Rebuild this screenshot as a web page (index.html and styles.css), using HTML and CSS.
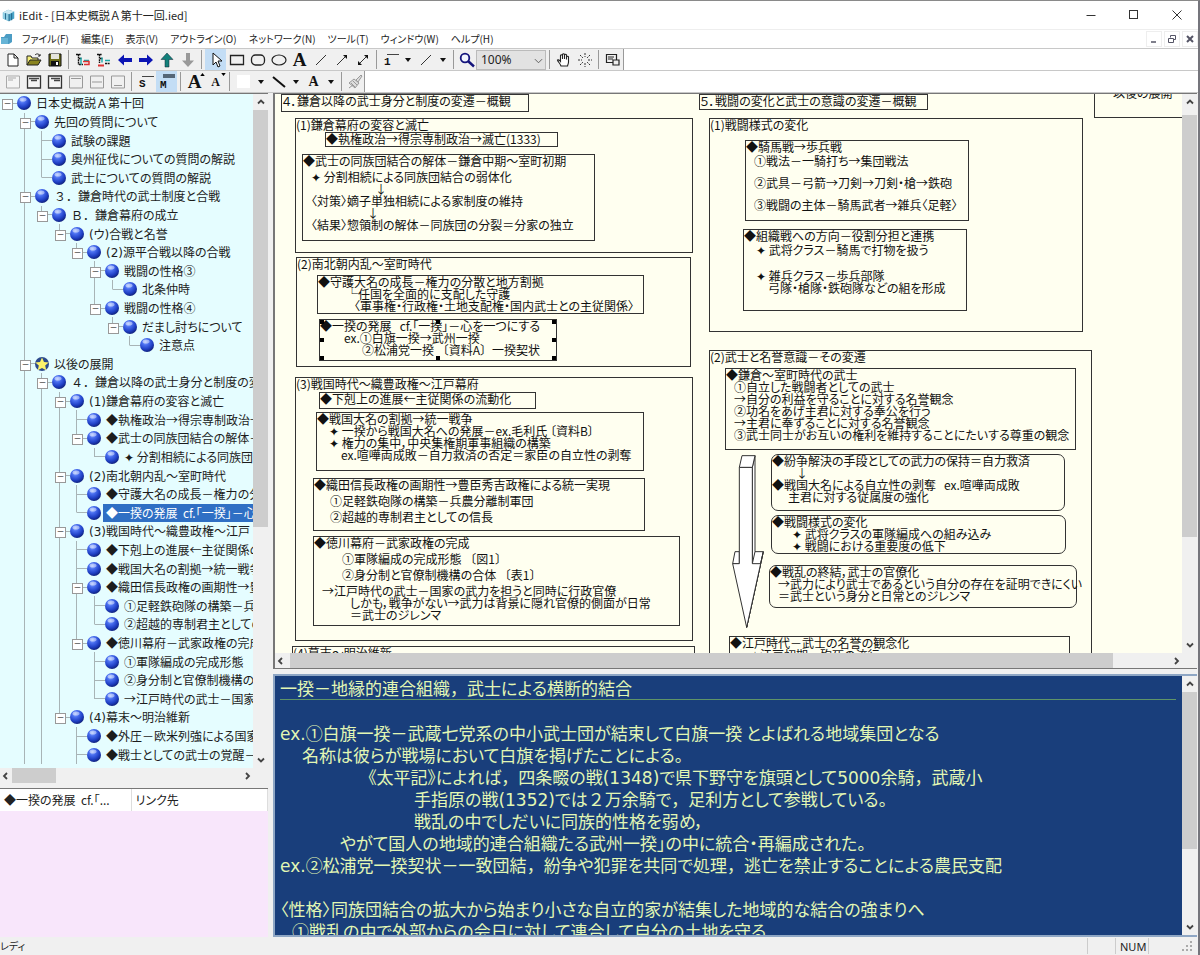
FILE: index.html
```html
<!DOCTYPE html>
<html lang="ja">
<head>
<meta charset="utf-8">
<title>iEdit - [日本史概説Ａ第十一回.ied]</title>
<link rel="stylesheet" href="styles.css">
</head>
<body>
<svg class="defs" aria-hidden="true">
  <defs>
    <radialGradient id="ball" cx="38%" cy="28%" r="75%">
      <stop offset="0" stop-color="#9db8ff"/><stop offset=".3" stop-color="#4a6ff0"/><stop offset=".7" stop-color="#1f3fc4"/><stop offset="1" stop-color="#0f1f78"/>
    </radialGradient>
    <symbol id="i-ball" viewBox="0 0 16 16"><circle cx="8" cy="8" r="7" fill="url(#ball)"/><ellipse cx="7" cy="4.500" rx="3.500" ry="2" fill="#fff" opacity=".45"/></symbol>
    <symbol id="i-star" viewBox="0 0 16 16"><circle cx="8" cy="8" r="7" fill="#2c4a8c"/><path d="M8 1.500l2 4.400 4.700.5-3.500 3.200 1 4.700L8 12l-4.200 2.300 1-4.700L1.300 6.400 6 5.900z" fill="#fdf36a"/></symbol>
    <symbol id="i-up" viewBox="0 0 10 10"><path d="M2 6.500L5 3.500l3 3" fill="none" stroke="#444" stroke-width="1.800"/></symbol>
    <symbol id="i-down" viewBox="0 0 10 10"><path d="M2 3.500l3 3 3-3" fill="none" stroke="#444" stroke-width="1.800"/></symbol>
    <symbol id="i-left" viewBox="0 0 10 10"><path d="M6.500 2l-3 3 3 3" fill="none" stroke="#444" stroke-width="1.800"/></symbol>
    <symbol id="i-right" viewBox="0 0 10 10"><path d="M3.500 2l3 3-3 3" fill="none" stroke="#444" stroke-width="1.800"/></symbol>
    <symbol id="i-dd" viewBox="0 0 10 10"><path d="M2 3h6L5 7z" fill="#111"/></symbol>
  </defs>
</svg>
<div class="app">
  <header class="titlebar">
    <svg class="logo" viewBox="0 0 16 16"><path d="M1 5l6-3 7 2v8l-6 3-7-3z" fill="#4aa5c8"/><path d="M1 5l7 2v8l-7-3z" fill="#8fcfe4"/><path d="M1 5l6-3 7 2-6 3z" fill="#cfeaf3"/><path d="M4 6v7M8 7v8M11 6v8" stroke="#1f5f84"/></svg>
    <h1 class="title">iEdit - [日本史概説<b>Ａ</b>第十一回.ied]</h1>
    <div class="winbtns">
      <button type="button" aria-label="最小化"><svg viewBox="0 0 12 12"><path d="M1.500 6.500h9" stroke="#333"/></svg></button>
      <button type="button" aria-label="最大化"><svg viewBox="0 0 12 12"><rect x="1.500" y="1.500" width="8" height="8" fill="none" stroke="#333"/></svg></button>
      <button type="button" aria-label="閉じる"><svg viewBox="0 0 12 12"><path d="M1.500 1.500l9 9M10.500 1.500l-9 9" stroke="#333"/></svg></button>
    </div>
  </header>
  <nav class="menubar">
    <svg class="docicon" viewBox="0 0 14 14"><path d="M1 5h3l2-3h6v8l-3 2H1z" fill="#4b9cc4"/><path d="M1 6h7v6H1z" fill="#66b4d6"/></svg>
    <div class="menus"><button type="button">ファイル(F)</button><button type="button">編集(E)</button><button type="button">表示(V)</button><button type="button">アウトライン(O)</button><button type="button">ネットワーク(N)</button><button type="button">ツール(T)</button><button type="button">ウィンドウ(W)</button><button type="button">ヘルプ(H)</button></div>
    <div class="mdibtns">
      <button type="button" aria-label="文書を最小化"><svg viewBox="0 0 10 10"><path d="M2 8h5" stroke="#556" stroke-width="1.500"/></svg></button>
      <button type="button" aria-label="文書を元に戻す"><svg viewBox="0 0 10 10"><path d="M3.500 3.500v-2h5v4h-2M1.500 4.500h5v4h-5z" fill="none" stroke="#556"/></svg></button>
      <button type="button" aria-label="文書を閉じる"><svg viewBox="0 0 10 10"><path d="M2 2l6 6M8 2l-6 6" stroke="#556" stroke-width="2"/></svg></button>
    </div>
  </nav>
  <div class="toolrow">
    <div class="toolbar">
      <button type="button" aria-label="新規"><svg viewBox="0 0 16 16"><path d="M3 2h6l4 4v8H3zM9 2v4h4" fill="#fff" stroke="#222"/></svg></button>
      <button type="button" aria-label="開く"><svg viewBox="0 0 16 16"><path d="M1 13V4h4l1 2h6v2" fill="#f4ee7a" stroke="#222"/><path d="M1 13l3-5h11l-3 5z" fill="#8a8420" stroke="#222"/><path d="M9 3c2-2 4-1 5 1m0-2v2h-2" fill="none" stroke="#222"/></svg></button>
      <button type="button" aria-label="保存"><svg viewBox="0 0 16 16"><path d="M2 2h12v12H2z" fill="#6c6c18" stroke="#111"/><path d="M4 2h8v5H4z" fill="#e4e4dc"/><path d="M4 9h8v5H4z" fill="#111"/><path d="M9 10h2v3H9z" fill="#fff"/></svg></button>
      <span class="sep"></span>
      <button type="button" aria-label="兄弟項目を追加"><svg viewBox="0 0 16 16"><path d="M1 2.500h5M3.500 2v11M4 6.500h3M4 12.500h4" fill="none" stroke="#111" stroke-width="1.400" stroke-dasharray="2 .6"/><path d="M6 5.500v7M9 8.500h5" fill="none" stroke="#19a8a8" stroke-width="1.400"/><path d="M8 9.500h6v3H9" fill="none" stroke="#d33" stroke-width="1.500"/></svg></button>
      <button type="button" aria-label="子項目を追加"><svg viewBox="0 0 16 16"><path d="M1 2.500h5M3.500 2v9M4 6.500h3M9 11.500h5" fill="none" stroke="#111" stroke-width="1.400" stroke-dasharray="2 .6"/><path d="M6 5.500v5M9 8.500h5" fill="none" stroke="#19a8a8" stroke-width="1.400"/><path d="M2 13.500h6" stroke="#d33" stroke-width="2"/></svg></button>
      <button type="button" aria-label="左へ"><svg viewBox="0 0 16 16"><path d="M1 8l6-5.500V6h8v4H7v3.500z" fill="#0b14b4"/></svg></button>
      <button type="button" aria-label="右へ"><svg viewBox="0 0 16 16"><path d="M15 8L9 2.500V6H1v4h8v3.500z" fill="#0b14b4"/></svg></button>
      <button type="button" aria-label="上へ"><svg viewBox="0 0 16 16"><path d="M8 1l6 6.500h-4V15H6V7.500H2z" fill="#12807a" stroke="#123" stroke-width=".5"/></svg></button>
      <button type="button" aria-label="下へ"><svg viewBox="0 0 16 16"><path d="M8 15l6-6.500h-4V1H6v7.500H2z" fill="#999"/></svg></button>
      <span class="sep"></span>
      <button type="button" class="on" aria-label="選択"><svg viewBox="0 0 16 16"><path d="M5 1v12l3-3 2 5 2-1-2-5h4z" fill="#fff" stroke="#111"/></svg></button>
      <button type="button" aria-label="四角形"><svg viewBox="0 0 16 16"><path d="M1.500 3.500h13v9h-13z" fill="none" stroke="#222" stroke-width="1.300"/></svg></button>
      <button type="button" aria-label="角丸四角形"><svg viewBox="0 0 16 16"><rect x="1.500" y="3" width="13" height="10" rx="4" fill="none" stroke="#222" stroke-width="1.300"/></svg></button>
      <button type="button" aria-label="楕円"><svg viewBox="0 0 16 16"><ellipse cx="8" cy="8" rx="7" ry="5" fill="none" stroke="#222" stroke-width="1.200"/></svg></button>
      <button type="button" class="glyph g-l" aria-label="ラベル">A</button>
      <button type="button" aria-label="直線"><svg viewBox="0 0 16 16"><path d="M3 13L13 3" stroke="#333"/></svg></button>
      <button type="button" aria-label="矢印"><svg viewBox="0 0 16 16"><path d="M3 13L12 4" stroke="#333"/><path d="M9 3h4v4z" fill="#111"/></svg></button>
      <button type="button" aria-label="両矢印"><svg viewBox="0 0 16 16"><path d="M4 12l8-8" stroke="#333"/><path d="M9 3h4v4zM3 9v4h4z" fill="#111"/></svg></button>
      <span class="sep"></span>
      <button type="button" class="glyph g-s" aria-label="線の太さ"><span class="bar"></span>1</button>
      <button type="button" class="dd" aria-label="線の太さの一覧"><svg viewBox="0 0 10 10"><use href="#i-dd"/></svg></button>
      <button type="button" aria-label="線の種類"><svg viewBox="0 0 16 16"><path d="M3 13L13 3" stroke="#333"/></svg></button>
      <button type="button" class="dd" aria-label="線の種類の一覧"><svg viewBox="0 0 10 10"><use href="#i-dd"/></svg></button>
      <span class="sep"></span>
      <button type="button" class="find" aria-label="検索"><svg viewBox="0 0 16 16"><circle cx="6" cy="6" r="4.300" fill="#f2f6ff" stroke="#14147c" stroke-width="1.800"/><path d="M9 9l6 5.500" stroke="#14147c" stroke-width="2.400"/></svg></button>
      <label class="zoomsel"><select aria-label="表示倍率"><option>100%</option></select><svg viewBox="0 0 10 10"><path d="M1 3.500l4 4 4-4" fill="none" stroke="#555"/></svg></label>
      <span class="sep"></span>
      <button type="button" aria-label="手のひら"><svg viewBox="0 0 16 16"><path d="M5 14c-1-3-3-4-3.500-6 1-.8 2 .2 3 1.500V3.500c.3-1 1.700-1 2 0V7 2.500c.3-1 1.700-1 2 0V7 3c.3-1 1.700-1 2 0v4.500V5c.4-1 1.800-.8 2 0v5c0 2-1 3-1 4z" fill="#fff" stroke="#222" stroke-width="1.100"/></svg></button>
      <button type="button" aria-label="集中表示"><svg viewBox="0 0 16 16"><path d="M8 1v4M8 11v4M1 8h4M11 8h4M3 3l3 3M13 3l-3 3M3 13l3-3M13 13l-3-3" stroke="#333" stroke-dasharray="2 1"/></svg></button>
      <span class="sep"></span>
      <button type="button" aria-label="全体表示"><svg viewBox="0 0 16 16"><path d="M1.500 2.500h10v8h-10zM3 5h6M3 7h5" fill="none" stroke="#222" stroke-width="1.200"/><path d="M8 8h6v5H8z" fill="#eee" stroke="#222" stroke-width="1.200"/></svg></button>
    </div>
  </div>
  <div class="toolrow">
    <div class="toolbar">
      <button type="button" aria-label="左上揃え"><svg viewBox="0 0 16 16"><path d="M1.500 2h13v12h-13z" fill="#f4f4f4" stroke="#aaa"/><path d="M3 4h8M3 6h5" stroke="#aaa"/></svg></button>
      <button type="button" aria-label="中央上揃え"><svg viewBox="0 0 16 16"><path d="M1.500 2h13v12h-13z" fill="#f4f4f4" stroke="#333" stroke-width="1.300"/><path d="M3 4.500h10M5 6.500h6" stroke="#444" stroke-width="1.500"/></svg></button>
      <button type="button" aria-label="右上揃え"><svg viewBox="0 0 16 16"><path d="M1.500 2h13v12h-13z" fill="#f4f4f4" stroke="#333" stroke-width="1.300"/><path d="M4 4.500h9M7 6.500h6" stroke="#444" stroke-width="1.500"/></svg></button>
      <button type="button" aria-label="上寄せ"><svg viewBox="0 0 16 16"><path d="M1.500 2h13v12h-13zM3 4.500h10" fill="none" stroke="#999"/></svg></button>
      <button type="button" aria-label="中央寄せ"><svg viewBox="0 0 16 16"><path d="M1.500 2h13v12h-13zM3 8h10" fill="none" stroke="#999"/></svg></button>
      <button type="button" aria-label="下寄せ"><svg viewBox="0 0 16 16"><path d="M1.500 2h13v12h-13zM4 11.500h8" fill="none" stroke="#999"/></svg></button>
      <span class="sep"></span>
      <button type="button" class="glyph g-s" aria-label="一行表示"><span class="bar"></span>S</button>
      <button type="button" class="glyph g-s on" aria-label="複数行表示"><span class="bar thick"></span>M</button>
      <span class="sep"></span>
      <button type="button" class="glyph g-l" aria-label="文字を大きく">A<svg class="tick" viewBox="0 0 6 4"><path d="M0 4l3-4 3 4z"/></svg></button>
      <button type="button" class="glyph g-t" aria-label="文字を小さく">A<svg class="tick" viewBox="0 0 6 4"><path d="M0 0h6L3 4z"/></svg></button>
      <span class="sep"></span>
      <button type="button" aria-label="塗りつぶし色"><span class="swatch"></span></button>
      <button type="button" class="dd" aria-label="塗りつぶし色の一覧"><svg viewBox="0 0 10 10"><use href="#i-dd"/></svg></button>
      <button type="button" aria-label="線の色"><svg viewBox="0 0 16 16"><path d="M2 3l12 10" stroke="#111" stroke-width="2"/></svg></button>
      <button type="button" class="dd" aria-label="線の色の一覧"><svg viewBox="0 0 10 10"><use href="#i-dd"/></svg></button>
      <button type="button" class="glyph g-m" aria-label="文字色">A</button>
      <button type="button" class="dd" aria-label="文字色の一覧"><svg viewBox="0 0 10 10"><use href="#i-dd"/></svg></button>
      <span class="sep"></span>
      <button type="button" class="find" aria-label="書式のコピー"><svg viewBox="0 0 16 16"><path d="M9 6l5-5 1 1-4 6zM2 9l5-4 5 4-4 5z" fill="#ddd" stroke="#999"/><path d="M4 9l4 4M6 7l4 4M2 14l4-3" stroke="#999"/></svg></button>
    </div>
  </div>
  <main class="work">
    <aside class="side">
      <section class="treebox">
        <div class="treeview">
          <ul class="tree">
            <li class="d0 open"><svg><use href="#i-ball"/></svg><span>日本史概説<b>Ａ</b>第十回</span></li>
            <li class="d1 open"><svg><use href="#i-ball"/></svg><span>先回の質問について</span></li>
            <li class="d2 v0"><svg><use href="#i-ball"/></svg><span>試験の課題</span></li>
            <li class="d2 v0"><svg><use href="#i-ball"/></svg><span>奥州征伐についての質問の解説</span></li>
            <li class="d2 v0 last"><svg><use href="#i-ball"/></svg><span>武士についての質問の解説</span></li>
            <li class="d1 open"><svg><use href="#i-ball"/></svg><span><b>３．</b>鎌倉時代の武士制度と合戦</span></li>
            <li class="d2 open last v0"><svg><use href="#i-ball"/></svg><span><b>Ｂ．</b>鎌倉幕府の成立</span></li>
            <li class="d3 open last v0"><svg><use href="#i-ball"/></svg><span><i>(</i>ウ<i>)</i>合戦と名誉</span></li>
            <li class="d4 open last v0"><svg><use href="#i-ball"/></svg><span><i>(2)</i>源平合戦以降の合戦</span></li>
            <li class="d5 open v0"><svg><use href="#i-ball"/></svg><span>戦闘の性格③</span></li>
            <li class="d6 last v0 v4"><svg><use href="#i-ball"/></svg><span>北条仲時</span></li>
            <li class="d5 open last v0"><svg><use href="#i-ball"/></svg><span>戦闘の性格④</span></li>
            <li class="d6 open last v0"><svg><use href="#i-ball"/></svg><span>だまし討ちについて</span></li>
            <li class="d7 last v0"><svg><use href="#i-ball"/></svg><span>注意点</span></li>
            <li class="d1 open"><svg><use href="#i-star"/></svg><span>以後の展開</span></li>
            <li class="d2 open v0"><svg><use href="#i-ball"/></svg><span><b>４．</b>鎌倉以降の武士身分と制度の変遷</span></li>
            <li class="d3 open v0 v1"><svg><use href="#i-ball"/></svg><span><i>(1)</i>鎌倉幕府の変容と滅亡</span></li>
            <li class="d4 v0 v1 v2"><svg><use href="#i-ball"/></svg><span>◆執権政治→得宗専制政治→</span></li>
            <li class="d4 open last v0 v1 v2"><svg><use href="#i-ball"/></svg><span>◆武士の同族団結合の解体－</span></li>
            <li class="d5 last v0 v1 v2"><svg><use href="#i-ball"/></svg><span>✦ 分割相続による同族団結</span></li>
            <li class="d3 open v0 v1"><svg><use href="#i-ball"/></svg><span><i>(2)</i>南北朝内乱～室町時代</span></li>
            <li class="d4 v0 v1 v2"><svg><use href="#i-ball"/></svg><span>◆守護大名の成長－権力の分</span></li>
            <li class="d4 last v0 v1 v2 sel"><svg><use href="#i-ball"/></svg><span>◆一揆の発展&nbsp; cf.「一揆」－心</span></li>
            <li class="d3 open v0 v1"><svg><use href="#i-ball"/></svg><span><i>(3)</i>戦国時代～織豊政権～江戸</span></li>
            <li class="d4 v0 v1 v2"><svg><use href="#i-ball"/></svg><span>◆下剋上の進展←主従関係の</span></li>
            <li class="d4 v0 v1 v2"><svg><use href="#i-ball"/></svg><span>◆戦国大名の割拠→統一戦争</span></li>
            <li class="d4 open v0 v1 v2"><svg><use href="#i-ball"/></svg><span>◆織田信長政権の画期性→豊</span></li>
            <li class="d5 v0 v1 v2 v3"><svg><use href="#i-ball"/></svg><span>①足軽鉄砲隊の構築－兵</span></li>
            <li class="d5 last v0 v1 v2 v3"><svg><use href="#i-ball"/></svg><span>②超越的専制君主としての</span></li>
            <li class="d4 open last v0 v1 v2"><svg><use href="#i-ball"/></svg><span>◆徳川幕府－武家政権の完成</span></li>
            <li class="d5 v0 v1 v2"><svg><use href="#i-ball"/></svg><span>①軍隊編成の完成形態</span></li>
            <li class="d5 v0 v1 v2"><svg><use href="#i-ball"/></svg><span>②身分制と官僚制機構の合</span></li>
            <li class="d5 last v0 v1 v2"><svg><use href="#i-ball"/></svg><span>→江戸時代の武士－国家</span></li>
            <li class="d3 open last v0 v1"><svg><use href="#i-ball"/></svg><span><i>(4)</i>幕末～明治維新</span></li>
            <li class="d4 v0 v1"><svg><use href="#i-ball"/></svg><span>◆外圧－欧米列強による国家</span></li>
            <li class="d4 v0 v1"><svg><use href="#i-ball"/></svg><span>◆戦士としての武士の覚醒－攘</span></li>
          </ul>
        </div>
        <div class="vbar"><svg class="arr"><use href="#i-up"/></svg><div class="track"><div class="thumb t-tree"></div></div><svg class="arr"><use href="#i-down"/></svg></div>
        <div class="hbar"><svg class="arr"><use href="#i-left"/></svg><div class="track"><div class="thumb t-treeh"></div></div><svg class="arr"><use href="#i-right"/></svg></div>
      </section>
      <section class="links">
        <table>
          <thead><tr><th>◆一揆の発展&nbsp; cf.「...</th><th>リンク先</th></tr></thead>
        </table>
      </section>
    </aside>
    <div class="panes">
      <section class="canvasbox">
        <div class="canvas">
          <div class="node a"><p>４．鎌倉以降の武士身分と制度の変遷－概観</p></div>
          <div class="node b"><p>(1)鎌倉幕府の変容と滅亡</p></div>
          <div class="node b1"><p>◆執権政治→得宗専制政治→滅亡(1333)</p></div>
          <div class="node b2"><p>◆武士の同族団結合の解体－鎌倉中期～室町初期</p><p class="in8 gap4">✦ 分割相続による同族団結合の弱体化</p><p class="in72">↓</p><p class="in8">〈対策〉嫡子単独相続による家制度の維持</p><p class="in64">↓</p><p class="in8">〈結果〉惣領制の解体－同族団の分裂＝分家の独立</p></div>
          <div class="node c"><p>(2)南北朝内乱～室町時代</p></div>
          <div class="node c1"><p>◆守護大名の成長－権力の分散と地方割拠</p><p class="in28">└任国を全面的に支配した守護</p><p class="in36">〈軍事権・行政権・土地支配権・国内武士との主従関係〉</p></div>
          <div class="node c2"><p>◆一揆の発展&nbsp; &nbsp;cf.「一揆」－心を一つにする</p><p class="in24">ex.①白旗一揆→武州一揆</p><p class="in42">②松浦党一揆 <b>〔</b>資料A<b>〕</b>一揆契状</p>
            <svg class="handles" viewBox="0 0 236 40"><path d="M0 0h4v4H0zM116 0h4v4h-4zM232 0h4v4h-4zM0 18h4v4H0zM232 18h4v4h-4zM0 36h4v4H0zM116 36h4v4h-4zM232 36h4v4h-4z"/></svg></div>
          <div class="node d"><p>(3)戦国時代～織豊政権～江戸幕府</p></div>
          <div class="node d1"><p>◆下剋上の進展←主従関係の流動化</p></div>
          <div class="node d2"><p>◆戦国大名の割拠→統一戦争</p><p class="in12">✦ 一揆から戦国大名への発展－ex.毛利氏 〔資料B〕</p><p class="in12">✦ 権力の集中，中央集権期軍事組織の構築</p><p class="in24">ex.喧嘩両成敗－自力救済の否定＝家臣の自立性の剥奪</p></div>
          <div class="node d3"><p>◆織田信長政権の画期性→豊臣秀吉政権による統一実現</p><p class="in16 gap4">①足軽鉄砲隊の構築－兵農分離制軍団</p><p class="in16 gap4">②超越的専制君主としての信長</p></div>
          <div class="node d4"><p>◆徳川幕府－武家政権の完成</p><p class="in28 gap4">①軍隊編成の完成形態 <b>〔</b>図1<b>〕</b></p><p class="in28 gap4">②身分制と官僚制機構の合体 <b>〔</b>表1<b>〕</b></p><p class="in8 gap4">→江戸時代の武士－国家の武力を担うと同時に行政官僚</p><p class="in36">しかも，戦争がない→武力は背景に隠れ官僚的側面が日常</p><p class="in36">＝武士のジレンマ</p></div>
          <div class="node e"><p>(4)幕末～明治維新</p></div>
          <div class="node f"><p>５．戦闘の変化と武士の意識の変遷－概観</p></div>
          <div class="node g"><p>(1)戦闘様式の変化</p></div>
          <div class="node g1"><p>◆騎馬戦→歩兵戦</p><p class="in8 gap2">①戦法－一騎打ち→集団戦法</p><p class="in8 gap10">②武具－弓箭→刀剣→刀剣・槍→鉄砲</p><p class="in8 gap10">③戦闘の主体－騎馬武者→雑兵〈足軽〉</p></div>
          <div class="node g2"><p>◆組織戦への方向－役割分担と連携</p><p class="in12 gap2">✦ 武将クラス－騎馬で打物を扱う</p><p class="in12 gap14">✦ 雑兵クラス－歩兵部隊</p><p class="in24">弓隊・槍隊・鉄砲隊などの組を形成</p></div>
          <div class="node h"><p>(2)武士と名誉意識－その変遷</p></div>
          <div class="node h1"><p>◆鎌倉～室町時代の武士</p><p class="in8">①自立した戦闘者としての武士</p><p class="in8">→自分の利益を守ることに対する名誉観念</p><p class="in8">②功名をあげ主君に対する奉公を行う</p><p class="in8">→主君に奉ずることに対する名誉観念</p><p class="in8">③武士同士がお互いの権利を維持することにたいする尊重の観念</p></div>
          <div class="node round h2"><p>◆紛争解決の手段としての武力の保持＝自力救済</p><p class="in24">↓</p><p>◆戦国大名による自立性の剥奪&nbsp; &nbsp;ex.喧嘩両成敗</p><p class="in16">主君に対する従属度の強化</p></div>
          <div class="node round h3"><p>◆戦闘様式の変化</p><p class="in20">✦ 武将クラスの軍隊編成への組み込み</p><p class="in20">✦ 戦闘における重要度の低下</p></div>
          <div class="node round h4"><p>◆戦乱の終結，武士の官僚化</p><p class="in8">→武力により武士であるという自分の存在を証明できにくい</p><p class="in8">＝武士という身分と日常とのジレンマ</p></div>
          <div class="node h5"><p>◆江戸時代－武士の名誉の観念化</p><p class="in20">✦江戸初期－殉死の流行</p></div>
          <div class="node k"><p>以後の展開</p></div>
          <svg class="bigarrow" viewBox="96 345 96 522"><g fill="#fff" stroke="#333" stroke-width="3" stroke-linejoin="round"><path d="M157 635h33l-8 36-42 191V671h17z"/><path d="M182 671l8-36-50 227z"/><path d="M105 635h13v36H98z"/><path d="M157 382l8-35v288l-8 36z"/><path d="M118 382h39v289h25l-42 191-42-191h20z"/><path d="M118 382l8-35h39l-8 35z"/></g></svg>
        </div>
        <div class="vbar"><svg class="arr"><use href="#i-up"/></svg><div class="track"><div class="thumb t-can"></div></div><svg class="arr"><use href="#i-down"/></svg></div>
        <div class="hbar"><svg class="arr"><use href="#i-left"/></svg><div class="track"><div class="thumb t-canh"></div></div><svg class="arr"><use href="#i-right"/></svg></div>
      </section>
      <section class="notebox">
        <div class="note">
          <p class="head">一揆－地縁的連合組織<b>，</b>武士による横断的結合</p>
          <p class="blank"></p>
          <p><i>ex.</i>①白旗一揆－武蔵七党系の中小武士団が結束して白旗一揆 とよばれる地域集団となる</p>
          <p class="t1">名称は彼らが戦場において白旗を掲げたことによる。</p>
          <p class="t3">《太平記》によれば<b>，</b>四条畷の戦<i>(1348)</i>で県下野守を旗頭として<i>5000</i>余騎<b>，</b>武蔵小</p>
          <p class="t4">手指原の戦<i>(1352)</i>では<b>２</b>万余騎で<b>，</b>足利方として参戦している。</p>
          <p class="t4">戦乱の中でしだいに同族的性格を弱め，</p>
          <p class="t2">やがて国人の地域的連合組織たる武州一揆」の中に統合・再編成された。</p>
          <p><i>ex.</i>②松浦党一揆契状－一致団結<b>，</b>紛争や犯罪を共同で処理<b>，</b>逃亡を禁止することによる農民支配</p>
          <p class="blank"></p>
          <p>〈性格〉同族団結合の拡大から始まり小さな自立的家が結集した地域的な結合の強まりへ</p>
          <p class="t0">①戦乱の中で外部からの会日に対して連合して自分の土地を守る</p>
        </div>
        <div class="vbar"><svg class="arr"><use href="#i-up"/></svg><div class="track"><div class="thumb t-note"></div></div><svg class="arr"><use href="#i-down"/></svg></div>
      </section>
    </div>
  </main>
  <footer class="status"><span class="ready">レディ</span><span class="cell"></span><span class="cell num">NUM</span><span class="cell"></span><svg class="grip" viewBox="0 0 12 12"><path d="M9 1h2v2H9zM9 5h2v2H9zM5 5h2v2H5zM9 9h2v2H9zM5 9h2v2H5zM1 9h2v2H1z" fill="#aaa"/></svg></footer>
</div>
</body>
</html>
```
FILE: styles.css
```css
* { box-sizing: border-box; margin: 0; padding: 0; }
body { font: 12px/18px "Noto Sans CJK JP", sans-serif; font-feature-settings: "palt"; color: #222; background: #f0f0f0; }
button { font: inherit; font-feature-settings: inherit; color: inherit; background: none; border: 0; }
ul { list-style: none; }
i { font-family: "DejaVu Sans", "Noto Sans CJK JP", sans-serif; font-style: normal; line-height: 1; }
b { font-weight: 400; font-feature-settings: normal; }
.defs { position: absolute; width: 0; height: 0; }

.app { display: flex; flex-direction: column; height: 100vh; overflow: hidden; border-top: 1px solid #8a8a8a; border-right: 2px solid #75757c; }

.titlebar { display: flex; align-items: center; gap: 3px; flex: 0 0 28px; padding-left: 2px; background: #fff; }
.logo { width: 14px; height: 14px; }
.title { flex: 1; font-size: 11px; font-weight: 400; }
.winbtns { display: flex; }
.winbtns button { display: grid; place-items: center; width: 43px; height: 28px; }
.winbtns svg { width: 12px; height: 12px; }

.menubar { display: flex; align-items: center; gap: 8px; flex: 0 0 20px; background: #fff; border-top: 1px solid #eee; border-bottom: 1px solid #c8c8c8; font-size: 10px; color: #222; }
.menus { display: flex; gap: 12px; }
.docicon { width: 14px; height: 14px; }
.mdibtns { display: flex; gap: 2px; margin-left: auto; }
.mdibtns button { display: grid; place-items: center; width: 16px; height: 16px; border: 1px solid #eee; }
.mdibtns svg { width: 10px; height: 10px; }

.toolrow { flex: 0 0 22px; display: flex; background: #fff; border-bottom: 1px solid #c8c8c8; }
.toolbar { display: flex; align-items: center; padding-left: 2px; background: #f0f0f0; border-right: 1px solid #999; }
.toolbar button { display: grid; place-items: center; width: 21px; height: 21px; position: relative; }
.toolbar button svg { width: 16px; height: 16px; }
.toolbar .dd { width: 14px; }
.toolbar .dd svg { width: 10px; height: 10px; }
.toolbar .find { width: 19px; }
.toolbar .on { background: #c3ddf5; }
.sep { width: 1px; height: 19px; margin: 0 3px; background: #999; }
.glyph { font-family: "Liberation Serif", serif; font-weight: 700; color: #111; }
.toolbar .g-l { font-size: 19px; }
.toolbar .g-m { font-size: 14px; }
.toolbar .g-t { font-size: 12px; }
.toolbar .g-s { font-family: "Liberation Mono", monospace; font-size: 11px; line-height: 8px; align-content: center; justify-items: start; gap: 3px; padding-left: 4px; }
.bar { width: 12px; height: 1px; background: #444; justify-self: end; margin-right: 2px; }
.thick { height: 4px; background: #567; }
.toolbar button .tick { position: absolute; top: 2px; right: 0; width: 5px; height: 3px; }
.swatch { width: 13px; height: 13px; background: #fff; }
.zoomsel { position: relative; display: flex; width: 70px; }
.zoomsel select { width: 100%; height: 20px; padding-left: 4px; appearance: none; background: #e2e2e2; border: 1px solid #bbb; font: 12px/16px "Noto Sans", "Noto Sans CJK JP", sans-serif; color: #222; }
.zoomsel svg { position: absolute; right: 3px; top: 6px; width: 9px; height: 9px; pointer-events: none; }

.work { flex: 1; min-height: 0; display: grid; grid-template-columns: 268px 1fr; column-gap: 5px; padding-right: 1px; }
.side { min-height: 0; display: flex; flex-direction: column; gap: 5px; }
.treebox { flex: 1; min-height: 0; display: grid; grid-template: 1fr 15px / 1fr 15px; border-top: 1px solid #777; background: #f0f0f0; }
.treeview { overflow: hidden; min-height: 0; background: #e5fdff; }
.tree { height: 100%; padding-bottom: 4px; display: grid; grid-auto-rows: 1fr; }
.tree li { --x: 0px; --g: linear-gradient(#a8b4b6, #a8b4b6); position: relative; display: flex; align-items: center; gap: 1px; padding-left: calc(var(--x) + 16px); white-space: nowrap; min-height: 0; line-height: 16px; color: #1c1c1c; background-repeat: no-repeat; background-image: var(--g), var(--g), var(--g), var(--g), var(--g), var(--g); background-size: 10px 1px, 1px var(--own, 100%), 1px var(--l0, 0), 1px var(--l1, 0), 1px var(--l2, 0), 1px var(--l3, 0); background-position: calc(var(--x) + 7px) 50%, calc(var(--x) + 6px) 0, 24px 0, 41px 0, 59px 0, 76px 0; }
.tree svg { flex: 0 0 16px; width: 16px; height: 16px; }
.tree span { padding: 0 3px; }
.tree .d1 { --x: 18px; } .tree .d2 { --x: 35px; } .tree .d3 { --x: 53px; } .tree .d4 { --x: 70px; } .tree .d5 { --x: 88px; } .tree .d6 { --x: 106px; } .tree .d7 { --x: 123px; }
.tree .v4 { background-size: 10px 1px, 1px 50%, 1px 100%, 1px 100%; background-position: calc(var(--x) + 7px) 50%, calc(var(--x) + 6px) 0, 24px 0, 94px 0; background-image: var(--g), var(--g), var(--g), var(--g); }
.tree .d0 { --own: 0; }
.tree .last { --own: 50%; }
.tree .v0 { --l0: 100%; }
.tree .v1 { --l1: 100%; }
.tree .v2 { --l2: 100%; }
.tree .v3 { --l3: 100%; }
.open::before { content: "−"; position: absolute; left: calc(var(--x) + 2px); top: 50%; width: 9px; height: 9px; margin-top: -4px; border: 1px solid #999; background: #fff; font: 9px/7px "DejaVu Sans", sans-serif; text-align: center; color: #555; }
.tree .sel span { flex: 1; overflow: hidden; background: #2f6fc4; color: #fff; line-height: 18px; }

.vbar { display: flex; flex-direction: column; align-items: center; background: #f0f0f0; }
.hbar { display: flex; align-items: center; background: #f0f0f0; }
.arr { width: 10px; height: 10px; }
.vbar .arr { flex: 0 0 16px; }
.vbar .arr { height: 16px; padding: 3px 0; }
.hbar .arr { flex: 0 0 11px; }
.track { flex: 1; align-self: stretch; display: flex; }
.vbar .track { flex-direction: column; }
.thumb { background: #cdcdcd; }
.t-tree { height: 65%; }
.t-treeh { width: 19%; margin-left: 1px; }
.t-can { height: 80%; margin-top: 5px; }
.t-canh { width: 93%; margin-left: 4px; }
.t-note { height: 69%; }

.links { flex: 0 0 149px; background: #f8e6fb; border-top: 1px solid #777; }
.links table { width: 100%; border-collapse: collapse; table-layout: fixed; }
.links th { height: 22px; padding: 0 4px; background: #fff; font-weight: 400; text-align: left; border-right: 1px solid #ddd; white-space: nowrap; }
.links th:first-child { width: 131px; }

.panes { min-width: 0; min-height: 0; display: grid; grid-template-rows: 576px minmax(0, 1fr); row-gap: 5px; }
.canvasbox { min-height: 0; display: grid; grid-template: 1fr 15px / 1fr 15px; border: 1px solid #777; border-width: 1px 0 1px 2px; }
.canvas { position: relative; overflow: hidden; background: #fffff0; color: #111; font-size: 12px; line-height: 12px; white-space: nowrap; }
.node { position: absolute; border: 1px solid #333; }
.round { border-radius: 7px; }
.a { left: 6px; top: 0; width: 248px; height: 18px; }
.b { left: 20px; top: 24px; width: 398px; height: 135px; }
.b1 { left: 50px; top: 38px; width: 233px; height: 15px; }
.b2 { left: 27px; top: 60px; width: 293px; height: 87px; }
.c { left: 21px; top: 163px; width: 395px; height: 110px; }
.c1 { left: 42px; top: 181px; width: 327px; height: 39px; }
.c2 { left: 44px; top: 225px; width: 238px; height: 42px; }
.d { left: 20px; top: 283px; width: 398px; height: 264px; }
.node.d1 { left: 44px; top: 298px; width: 217px; height: 17px; }
.node.d2 { left: 41px; top: 318px; width: 328px; height: 59px; }
.node.d3 { left: 38px; top: 384px; width: 332px; height: 53px; }
.node.d4 { left: 38px; top: 442px; width: 367px; height: 90px; }
.e { left: 17px; top: 552px; width: 403px; height: 40px; }
.f { left: 424px; top: 0; width: 229px; height: 16px; }
.g { left: 434px; top: 24px; width: 374px; height: 214px; }
.g1 { left: 470px; top: 46px; width: 224px; height: 81px; }
.g2 { left: 468px; top: 135px; width: 224px; height: 82px; }
.h { left: 434px; top: 256px; width: 383px; height: 400px; }
.h1 { left: 450px; top: 274px; width: 351px; height: 82px; }
.h2 { left: 496px; top: 360px; width: 294px; height: 57px; }
.h3 { left: 496px; top: 421px; width: 295px; height: 39px; }
.h4 { left: 494px; top: 471px; width: 308px; height: 43px; }
.h5 { left: 454px; top: 542px; width: 341px; height: 60px; }
.k { left: 819px; top: -8px; width: 150px; height: 32px; padding-left: 18px; }
.bigarrow { position: absolute; left: 457px; top: 361px; width: 32px; height: 174px; }
.handles { position: absolute; left: 0; top: 0; width: 100%; height: 100%; }
.in8 { padding-left: 8px; } .in12 { padding-left: 12px; } .in16 { padding-left: 16px; } .in20 { padding-left: 20px; }
.in24 { padding-left: 24px; } .in28 { padding-left: 28px; } .in36 { padding-left: 36px; } .in42 { padding-left: 42px; }
.in64 { padding-left: 64px; } .in72 { padding-left: 72px; }
.gap2 { margin-top: 2px; } .gap4 { margin-top: 4px; } .gap10 { margin-top: 10px; } .gap14 { margin-top: 14px; }

.notebox { min-height: 0; display: grid; grid-template: minmax(0, 1fr) / 1fr 15px; border: 2px solid #8ea6c4; border-right: 0; }
.note { overflow: hidden; padding: 1px 6px 0 5px; background: #193e7b; color: #e2f7b4; font-size: 17px; line-height: 22px; white-space: nowrap; }
.note .head { border-bottom: 1px solid #5f9468; }
.note .blank { height: 22px; }
.t0 { padding-left: 12px; } .t1 { padding-left: 22px; } .t2 { padding-left: 60px; } .t3 { padding-left: 88px; } .t4 { padding-left: 134px; }

.status { flex: 0 0 18px; display: flex; align-items: center; background: #f0f0f0; font-size: 11px; }
.ready { flex: 1; font-size: 10px; }
.cell { width: 28px; height: 16px; border-left: 1px solid #ccc; line-height: 18px; }
.num { width: 33px; padding-left: 4px; font-family: "Noto Sans", sans-serif; }
.grip { width: 22px; height: 12px; }
```
